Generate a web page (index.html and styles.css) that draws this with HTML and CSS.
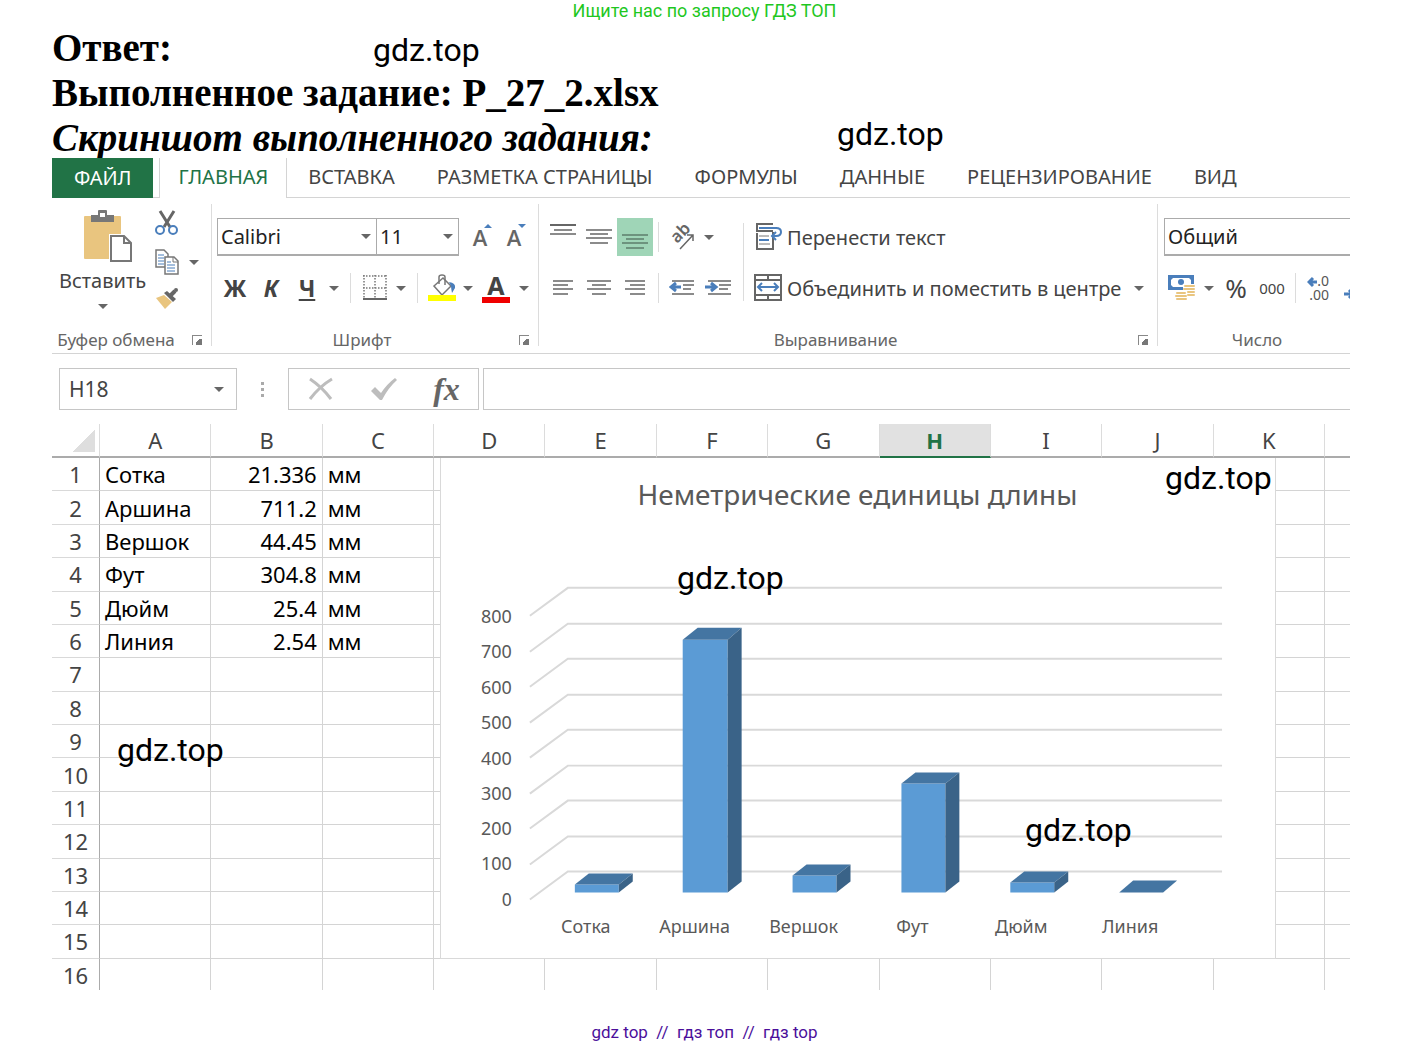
FILE: index.html
```html
<!DOCTYPE html>
<html lang="ru">
<head>
  <meta charset="UTF-8" />
  <meta name="viewport" content="width=device-width, initial-scale=1.0" />
  <title>Ответ: P_27_2.xlsx</title>
  <link rel="stylesheet" href="styles.css">
</head>
<body>
  <p class="top-note">Ищите нас по запросу ГДЗ ТОП</p>

  <main class="page">
    <h1 class="heading">Ответ:</h1>
    <h2 class="heading">Выполненное задание: P_27_2.xlsx</h2>
    <h2 class="heading heading-italic">Скриншот выполненного задания:</h2>

    <div class="excel">
      <!-- Ribbon tabs -->
      <nav class="tabs">
        <button class="tab tab-file">ФАЙЛ</button>
        <button class="tab tab-active">ГЛАВНАЯ</button>
        <button class="tab">ВСТАВКА</button>
        <button class="tab">РАЗМЕТКА СТРАНИЦЫ</button>
        <button class="tab">ФОРМУЛЫ</button>
        <button class="tab">ДАННЫЕ</button>
        <button class="tab">РЕЦЕНЗИРОВАНИЕ</button>
        <button class="tab">ВИД</button>
      </nav>

      <!-- Ribbon -->
      <div class="ribbon">
        <section class="group group-clipboard">
          <div class="group-body">
            <button class="paste">
              <svg width="58" height="54" viewBox="-10 0 58 54">
                <rect x="0" y="6" width="37" height="43" rx="1" fill="#e9c57f"/>
                <path d="M7 12V5h7V1q0-1 1-1h7q1 0 1 1v4h7v7z" fill="#777"/>
                <rect x="16" y="3" width="5" height="4" fill="#fff"/>
                <path d="M25 24h16l8 8v22H25z" fill="#fff"/>
                <path d="M27 26h13l7 7v18H27zM40 26v7h7" fill="#fff" stroke="#777" stroke-width="2"/>
              </svg>
              <span>Вставить</span>
              <i class="arrow"></i>
            </button>
            <div class="clip-tools">
              <button class="tool" aria-label="Вырезать">
                <svg width="24" height="26" viewBox="0 0 24 26">
                  <path d="M5 1l10 16M19 1L9 17" stroke="#666" stroke-width="3" fill="none"/>
                  <circle cx="5" cy="20" r="4" fill="none" stroke="#4a7ebb" stroke-width="2"/>
                  <circle cx="18" cy="20" r="4" fill="none" stroke="#4a7ebb" stroke-width="2"/>
                </svg>
              </button>
              <div class="tool-row">
                <button class="tool" aria-label="Копировать">
                  <svg width="24" height="26" viewBox="0 0 24 26">
                    <path d="M1 1h8l4 4v13H1z" fill="#fff" stroke="#777" stroke-width="1.5"/>
                    <path d="M3 6h6M3 9h6M3 12h6M3 15h6" stroke="#4a7ebb"/>
                    <path d="M10 8h9l4 4v13H10z" fill="#fff" stroke="#777" stroke-width="1.5"/>
                    <path d="M18 8v5h5" fill="none" stroke="#777"/>
                    <path d="M12 13h4M12 16h8M12 19h8M12 22h8" stroke="#4a7ebb"/>
                  </svg>
                </button>
                <i class="arrow"></i>
              </div>
              <button class="tool" aria-label="Формат по образцу">
                <svg width="24" height="22" viewBox="0 0 24 22">
                  <path d="M1 10l8-3 8 7-7 7z" fill="#e9c57f"/>
                  <path d="M9 5l3-2 9 8-3 3z" fill="#666"/>
                  <path d="M15 8l5-5" stroke="#666" stroke-width="4"/>
                  <circle cx="21" cy="2" r="2" fill="#666"/>
                </svg>
              </button>
            </div>
          </div>
          <footer class="group-footer"><span>Буфер обмена</span><i class="launcher"></i></footer>
        </section>

        <section class="group group-font">
          <div class="group-body group-rows">
            <div class="row">
              <label class="combo combo-font"><select aria-label="Шрифт"><option>Calibri</option></select><i class="arrow"></i></label>
              <label class="combo combo-size"><select aria-label="Размер"><option>11</option></select><i class="arrow"></i></label>
              <button class="btn letter" aria-label="Увеличить размер шрифта">A<i class="mark-up"></i></button>
              <button class="btn letter" aria-label="Уменьшить размер шрифта">A<i class="mark-down"></i></button>
            </div>
            <div class="row">
              <button class="btn style-btn"><b>Ж</b></button>
              <button class="btn style-btn"><b><em>К</em></b></button>
              <button class="btn style-btn"><b><u>Ч</u></b></button>
              <span class="drop"><i class="arrow"></i></span>
              <i class="sep"></i>
              <button class="btn" aria-label="Границы">
                <svg width="24" height="26" viewBox="0 0 24 26">
                  <path d="M0 1h24M0 13h24M1 0v24M12 0v24M23 0v24" stroke="#777" stroke-width="1.5" stroke-dasharray="1.5 1.5"/>
                  <path d="M0 24h24" stroke="#666" stroke-width="2"/>
                </svg>
              </button>
              <span class="drop"><i class="arrow"></i></span>
              <i class="sep"></i>
              <button class="btn" aria-label="Цвет заливки">
                <svg width="28" height="28" viewBox="0 0 28 28">
                  <path d="M6 12l9-8 8 8-9 9z" fill="#fff" stroke="#777" stroke-width="1.5"/>
                  <path d="M11 10V3q0-2 3-2t3 2v8" fill="none" stroke="#777" stroke-width="1.5"/>
                  <path d="M21 8q7 1 6 6l-3 5q-1-5-1-7z" fill="#4a7ebb"/>
                  <rect x="0" y="21" width="28" height="6" fill="#ffff00"/>
                </svg>
              </button>
              <span class="drop"><i class="arrow"></i></span>
              <button class="btn font-color"><b>A</b></button>
              <span class="drop"><i class="arrow"></i></span>
            </div>
          </div>
          <footer class="group-footer"><span>Шрифт</span><i class="launcher"></i></footer>
        </section>

        <section class="group group-align">
          <div class="group-body">
            <div class="group-rows">
              <div class="row">
                <button class="btn" aria-label="По верхнему краю">
                  <svg width="26" height="26" viewBox="0 0 26 26"><path d="M0 1h26" stroke="#666" stroke-width="2"/><path d="M4 6h18M0 10h26" stroke="#666" stroke-width="1.5"/></svg>
                </button>
                <button class="btn" aria-label="По середине">
                  <svg width="26" height="24" viewBox="0 0 26 24"><path d="M0 5h26M4 9h18M0 13h26M4 18h18" stroke="#666" stroke-width="1.5"/></svg>
                </button>
                <button class="btn btn-on" aria-label="По нижнему краю">
                  <svg width="26" height="24" viewBox="0 0 26 24"><path d="M0 10h26M4 14h18M0 18h26M4 23h18" stroke="#5d7d6c" stroke-width="1.5"/></svg>
                </button>
                <i class="sep"></i>
                <button class="btn" aria-label="Ориентация">
                  <svg width="28" height="28" viewBox="0 0 28 28">
                    <text transform="translate(9 21) rotate(-45)" class="icon-ab">ab</text>
                    <path d="M12 26L25 12M19 12h6v6" fill="none" stroke="#666" stroke-width="1.5"/>
                  </svg>
                </button>
                <span class="drop"><i class="arrow"></i></span>
              </div>
              <div class="row">
                <button class="btn" aria-label="По левому краю">
                  <svg width="20" height="18" viewBox="0 0 20 18"><path d="M0 2h20M0 6h15M0 10h20M0 15h15" stroke="#666" stroke-width="1.5"/></svg>
                </button>
                <button class="btn" aria-label="По центру">
                  <svg width="24" height="18" viewBox="0 0 24 18"><path d="M0 2h24M5 6h14M0 10h24M5 15h14" stroke="#666" stroke-width="1.5"/></svg>
                </button>
                <button class="btn" aria-label="По правому краю">
                  <svg width="20" height="18" viewBox="0 0 20 18"><path d="M0 2h20M5 6h15M0 10h20M5 15h15" stroke="#666" stroke-width="1.5"/></svg>
                </button>
                <i class="sep"></i>
                <button class="btn" aria-label="Уменьшить отступ">
                  <svg width="26" height="18" viewBox="0 0 26 18">
                    <path d="M3 2h22M14 6h11M14 10h8M3 15h22" stroke="#666" stroke-width="1.5"/>
                    <path d="M12 8H3M7 4L2 8l5 4" fill="none" stroke="#4a7ebb" stroke-width="3"/>
                  </svg>
                </button>
                <button class="btn" aria-label="Увеличить отступ">
                  <svg width="26" height="18" viewBox="0 0 26 18">
                    <path d="M3 2h23M14 6h12M14 10h9M3 15h23" stroke="#666" stroke-width="1.5"/>
                    <path d="M0 8h10M6 4l5 4-5 4" fill="none" stroke="#4a7ebb" stroke-width="3"/>
                  </svg>
                </button>
              </div>
            </div>
            <i class="sep sep-tall"></i>
            <div class="group-rows">
              <div class="row">
                <button class="wide-btn">
                  <svg width="28" height="28" viewBox="0 0 28 28">
                    <path d="M19 1H3v7h16M19 9v17H3V10" fill="none" stroke="#666" stroke-width="2"/>
                    <path d="M5 13h10M5 21h11" stroke="#777"/>
                    <path d="M5 17h10M5 5h18" stroke="#4a7ebb" stroke-width="2"/>
                    <path d="M22 5q5 0 5 4t-5 4h-4M22 9l-4 4 4 4" fill="none" stroke="#4a7ebb" stroke-width="2"/>
                  </svg>
                  <span>Перенести текст</span>
                </button>
              </div>
              <div class="row">
                <button class="wide-btn">
                  <svg width="28" height="28" viewBox="0 0 28 28">
                    <path d="M1 1h26v25H1zM1 6h26M1 21h26M14 1v5M14 21v5" fill="none" stroke="#666" stroke-width="2"/>
                    <path d="M4 13h20M8 9l-4 4 4 4M20 9l4 4-4 4" fill="none" stroke="#4a7ebb" stroke-width="2"/>
                  </svg>
                  <span>Объединить и поместить в центре</span>
                </button>
                <span class="drop drop-merge"><i class="arrow"></i></span>
              </div>
            </div>
          </div>
          <footer class="group-footer"><span>Выравнивание</span><i class="launcher"></i></footer>
        </section>

        <section class="group group-number">
          <div class="group-body group-rows">
            <div class="row">
              <label class="combo combo-number"><select aria-label="Числовой формат"><option>Общий</option></select></label>
            </div>
            <div class="row">
              <button class="btn" aria-label="Финансовый формат">
                <svg width="28" height="28" viewBox="0 0 28 28">
                  <rect x="0" y="1" width="26" height="15" fill="#4a7ebb"/>
                  <path d="M5 4h16l2 2v5l-2 2H5l-2-2V6z" fill="#fff"/>
                  <circle cx="13" cy="8" r="3" fill="#4a7ebb"/>
                  <path d="M15 10h12v14H8v-7h7z" fill="#fff"/>
                  <path d="M17 12h9M16 15h10M20 18h6M20 21h6M9 19h8M8 22h10M9 25h9" stroke="#e9c57f" stroke-width="2" stroke-linecap="round"/>
                </svg>
              </button>
              <span class="drop"><i class="arrow"></i></span>
              <button class="btn percent">%</button>
              <button class="btn zeros">000</button>
              <i class="sep"></i>
              <button class="btn" aria-label="Увеличить разрядность">
                <svg width="24" height="28" viewBox="0 0 24 28">
                  <path d="M10 8H3M6 4L2 8l4 4" fill="none" stroke="#4a7ebb" stroke-width="3"/>
                  <text x="22" y="12" text-anchor="end" class="icon-digits">.0</text>
                  <text x="22" y="26" text-anchor="end" class="icon-digits">.00</text>
                </svg>
              </button>
              <button class="btn" aria-label="Уменьшить разрядность">
                <svg width="24" height="28" viewBox="0 0 24 28">
                  <path d="M1 20h8M6 16l4 4-4 4" fill="none" stroke="#4a7ebb" stroke-width="3"/>
                </svg>
              </button>
            </div>
          </div>
          <footer class="group-footer"><span>Число</span></footer>
        </section>
      </div>

      <!-- Formula bar -->
      <div class="formula-bar">
        <div class="name-box">
          <input type="text" value="H18" aria-label="Имя ячейки" />
          <i class="arrow"></i>
        </div>
        <span class="dots"><i></i><i></i><i></i></span>
        <div class="formula-buttons">
          <button aria-label="Отмена">
            <svg width="26" height="24" viewBox="0 0 26 24"><path d="M2 2q12 8 21 20M24 2Q12 9 2 22" fill="none" stroke="#bdbdbd" stroke-width="3"/></svg>
          </button>
          <button aria-label="Ввод">
            <svg width="28" height="24" viewBox="0 0 28 24"><path d="M1 14l4-4 6 6Q17 7 25 1l2 2Q18 11 12 23h-2z" fill="#bdbdbd"/></svg>
          </button>
          <button class="fx">fx</button>
        </div>
        <input class="formula-input" type="text" aria-label="Строка формул" />
      </div>

      <!-- Sheet -->
      <div class="sheet">
        <table>
          <colgroup>
            <col class="col-num">
            <col class="col-cell" span="11">
            <col>
          </colgroup>
          <thead>
            <tr><th class="corner"></th><th>A</th><th>B</th><th>C</th><th>D</th><th>E</th><th>F</th><th>G</th><th class="selected">H</th><th>I</th><th>J</th><th>K</th><th></th></tr>
          </thead>
          <tbody>
            <tr><th>1</th><td>Сотка</td><td class="num">21.336</td><td>мм</td><td></td><td></td><td></td><td></td><td></td><td></td><td></td><td></td><td></td></tr>
            <tr><th>2</th><td>Аршина</td><td class="num">711.2</td><td>мм</td><td></td><td></td><td></td><td></td><td></td><td></td><td></td><td></td><td></td></tr>
            <tr><th>3</th><td>Вершок</td><td class="num">44.45</td><td>мм</td><td></td><td></td><td></td><td></td><td></td><td></td><td></td><td></td><td></td></tr>
            <tr><th>4</th><td>Фут</td><td class="num">304.8</td><td>мм</td><td></td><td></td><td></td><td></td><td></td><td></td><td></td><td></td><td></td></tr>
            <tr><th>5</th><td>Дюйм</td><td class="num">25.4</td><td>мм</td><td></td><td></td><td></td><td></td><td></td><td></td><td></td><td></td><td></td></tr>
            <tr><th>6</th><td>Линия</td><td class="num">2.54</td><td>мм</td><td></td><td></td><td></td><td></td><td></td><td></td><td></td><td></td><td></td></tr>
            <tr><th>7</th><td></td><td></td><td></td><td></td><td></td><td></td><td></td><td></td><td></td><td></td><td></td><td></td></tr>
            <tr><th>8</th><td></td><td></td><td></td><td></td><td></td><td></td><td></td><td></td><td></td><td></td><td></td><td></td></tr>
            <tr><th>9</th><td></td><td></td><td></td><td></td><td></td><td></td><td></td><td></td><td></td><td></td><td></td><td></td></tr>
            <tr><th>10</th><td></td><td></td><td></td><td></td><td></td><td></td><td></td><td></td><td></td><td></td><td></td><td></td></tr>
            <tr><th>11</th><td></td><td></td><td></td><td></td><td></td><td></td><td></td><td></td><td></td><td></td><td></td><td></td></tr>
            <tr><th>12</th><td></td><td></td><td></td><td></td><td></td><td></td><td></td><td></td><td></td><td></td><td></td><td></td></tr>
            <tr><th>13</th><td></td><td></td><td></td><td></td><td></td><td></td><td></td><td></td><td></td><td></td><td></td><td></td></tr>
            <tr><th>14</th><td></td><td></td><td></td><td></td><td></td><td></td><td></td><td></td><td></td><td></td><td></td><td></td></tr>
            <tr><th>15</th><td></td><td></td><td></td><td></td><td></td><td></td><td></td><td></td><td></td><td></td><td></td><td></td></tr>
            <tr><th>16</th><td></td><td></td><td></td><td></td><td></td><td></td><td></td><td></td><td></td><td></td><td></td><td></td></tr>
          </tbody>
        </table>

        <!-- Chart floats over the cells -->
        <figure class="chart">
          <svg viewBox="0 0 835 501">
            <text x="417" y="47" class="chart-title">Неметрические единицы длины</text>
            <g class="grid-lines">
              <path d="M89 158l38-28h655"/>
              <path d="M89 194l38-28h655"/>
              <path d="M89 229l38-28h655"/>
              <path d="M89 265l38-28h655"/>
              <path d="M89 300l38-28h655"/>
              <path d="M89 336l38-28h655"/>
              <path d="M89 371l38-28h655"/>
              <path d="M89 407l38-28h655"/>
              <path d="M89 442l38-28h655"/>
            </g>
            <g class="axis-y">
              <text x="71" y="165">800</text>
              <text x="71" y="200">700</text>
              <text x="71" y="236">600</text>
              <text x="71" y="271">500</text>
              <text x="71" y="307">400</text>
              <text x="71" y="342">300</text>
              <text x="71" y="377">200</text>
              <text x="71" y="413">100</text>
              <text x="71" y="449">0</text>
            </g>
            <g class="bar-front">
              <path d="M134 427h44v8h-44z"/>
              <path d="M242 182h45v253h-45z"/>
              <path d="M352 418h44v17h-44z"/>
              <path d="M461 326h44v109h-44z"/>
              <path d="M570 425h44v10h-44z"/>
            </g>
            <g class="bar-top">
              <path d="M134 427l14-11h44l-14 11z"/>
              <path d="M242 182l15-12h44l-14 12z"/>
              <path d="M352 418l14-11h44l-14 11z"/>
              <path d="M461 326l14-11h44l-14 11z"/>
              <path d="M570 425l14-11h44l-14 11z"/>
              <path d="M679 435l14-12h44l-14 12z"/>
            </g>
            <g class="bar-side">
              <path d="M178 427l14-11v8l-14 11z"/>
              <path d="M287 182l14-12v254l-14 11z"/>
              <path d="M396 418l14-11v17l-14 11z"/>
              <path d="M505 326l14-11v109l-14 11z"/>
              <path d="M614 425l14-11v10l-14 11z"/>
            </g>
            <g class="axis-x">
              <text x="145" y="476">Сотка</text>
              <text x="254" y="476">Аршина</text>
              <text x="363" y="476">Вершок</text>
              <text x="472" y="476">Фут</text>
              <text x="581" y="476">Дюйм</text>
              <text x="690" y="476">Линия</text>
            </g>
          </svg>
        </figure>
      </div>
    </div>
  </main>

  <p class="bottom-note">gdz top&nbsp; //&nbsp; гдз топ&nbsp; //&nbsp; гдз top</p>

  <!-- Watermarks over the page -->
  <span class="watermark wm-1">gdz.top</span>
  <span class="watermark wm-2">gdz.top</span>
  <span class="watermark wm-3">gdz.top</span>
  <span class="watermark wm-4">gdz.top</span>
  <span class="watermark wm-5">gdz.top</span>
  <span class="watermark wm-6">gdz.top</span>
</body>
</html>
```
FILE: styles.css
```css
* {
  margin: 0;
  padding: 0;
  box-sizing: border-box;
}

body {
  position: relative;
  background-color: #fff;
  color: #444;
  font-family: "Noto Sans", "Open Sans", sans-serif;
}

button,
select,
input {
  font: inherit;
  color: inherit;
  background: none;
  border: none;
  border-radius: 0;
  appearance: none;
  outline: none;
}

button {
  cursor: pointer;
  white-space: nowrap;
}

svg {
  display: block;
  flex: none;
}

/* Notes above and below the page */
.top-note,
.bottom-note {
  font-family: Roboto, sans-serif;
  line-height: 22px;
  text-align: center;
  padding-right: 2px;
}

.top-note {
  font-size: 18px;
  color: #1fc71f;
}

.bottom-note {
  font-size: 17px;
  color: #4b0f9b;
  margin-top: 31px;
}

.page {
  padding: 3px 61px 0 52px;
}

/* Headings */
.heading {
  font-family: "Liberation Serif", serif;
  font-size: 39px;
  line-height: 45px;
  font-weight: bold;
  color: #000;
}

.heading-italic {
  font-style: italic;
  margin-bottom: -2px;
}

.excel {
  overflow: hidden;
}

/* Ribbon tabs */
.tabs {
  display: flex;
  height: 40px;
  border-bottom: 1px solid #d4d4d4;
}

.tab {
  height: 40px;
  padding: 0 21px 3px;
  font-size: 20px;
  line-height: 36px;
}

.tab-file {
  padding: 0 22px;
  margin-right: 6px;
  background-color: #217346;
  color: #fff;
}

.tab-active {
  padding: 0 18px 3px;
  border: solid #d4d4d4;
  border-width: 0 1px;
  background-color: #fff;
  color: #217346;
}

/* Ribbon */
.ribbon {
  display: flex;
  height: 156px;
  padding: 6px 0 7px;
  border-bottom: 1px solid #d4d4d4;
}

.group {
  display: flex;
  flex-direction: column;
  justify-content: space-between;
  flex: none;
  border-right: 1px solid #dcdcdc;
}

.group-body {
  display: flex;
}

.group-clipboard {
  width: 160px;
}

.group-font {
  width: 327px;
  padding-left: 5px;
}

.group-align {
  width: 619px;
  padding-left: 6px;
}

.group-number {
  flex: 1;
  min-width: 0;
  padding-left: 6px;
  border-right: none;
}

.group-rows {
  display: flex;
  flex-direction: column;
  gap: 13px;
  padding-top: 14px;
}

.row {
  display: flex;
  align-items: center;
  height: 38px;
}

.group-footer {
  display: flex;
  align-items: center;
  height: 12px;
  padding-right: 9px;
  font-size: 17px;
  line-height: 12px;
  color: #666;
}

.group-footer span {
  flex: 1;
  margin-right: 12px;
  text-align: center;
  white-space: nowrap;
}

.group-number .group-footer {
  padding-right: 0;
}

.group-number .group-footer span {
  margin-right: 0;
}

/* Dialog launcher in the group corner */
.launcher {
  position: relative;
  width: 10px;
  height: 10px;
  border: solid #888;
  border-width: 1px 0 0 1px;
}

.launcher::after {
  content: "";
  position: absolute;
  right: 0;
  bottom: 0;
  width: 6px;
  height: 6px;
  background: linear-gradient(135deg, #fff 30%, #777 30%);
}

.arrow {
  flex: none;
  width: 10px;
  border: 5px solid transparent;
  border-top-color: #666;
  border-bottom: none;
}

.drop {
  display: flex;
  justify-content: center;
  flex: none;
  width: 18px;
}

.sep {
  flex: none;
  width: 1px;
  height: 30px;
  margin: 0 5px;
  background-color: #dcdcdc;
}

.sep-tall {
  height: 78px;
  margin: 19px 5px 0 7px;
}

.btn {
  display: flex;
  align-items: center;
  justify-content: center;
  width: 36px;
  height: 38px;
  flex: none;
}

.btn-on {
  background-color: #9fd5b7;
}

/* Clipboard group */
.paste {
  display: flex;
  flex-direction: column;
  align-items: center;
  width: 101px;
  padding-top: 6px;
  font-size: 20px;
  line-height: 34px;
}

.paste .arrow {
  margin-top: 6px;
}

.clip-tools {
  display: flex;
  flex-direction: column;
  gap: 13px;
  padding: 6px 0 0 2px;
}

.tool-row {
  display: flex;
  align-items: center;
  gap: 10px;
}

/* Font group */
.combo {
  display: flex;
  align-items: center;
  height: 38px;
  padding: 0 5px 0 3px;
  border: 1px solid #ababab;
  border-bottom-width: 2px;
  font-size: 20px;
  color: #222;
}

.combo select {
  flex: 1;
  min-width: 0;
}

.combo-font {
  width: 160px;
}

.combo-size {
  width: 83px;
  margin: 0 4px 0 -1px;
}

.combo-number {
  flex: 1;
  border-right: none;
}

.letter {
  position: relative;
  width: 34px;
  font-family: "Open Sans", sans-serif;
  font-size: 22px;
  font-weight: 600;
  color: #666;
}

.mark-up,
.mark-down {
  position: absolute;
  top: 6px;
  right: 5px;
  border: 4px solid transparent;
}

.mark-up {
  border-top: none;
  border-bottom-color: #4a7ebb;
}

.mark-down {
  border-bottom: none;
  border-top-color: #4a7ebb;
}

.style-btn {
  font-size: 23px;
}

.group-font .sep {
  margin: 0 7px;
}

.group-font .sep ~ .btn {
  width: 34px;
}

.group-font .row .font-color {
  width: 38px;
}

.font-color {
  flex-direction: column;
  font-size: 25px;
  line-height: 23px;
}

.font-color::after {
  content: "";
  width: 28px;
  height: 6px;
  background-color: #f00000;
}

/* Alignment group */
.wide-btn {
  display: flex;
  align-items: center;
  gap: 5px;
  padding-left: 5px;
  font-size: 20px;
}

.drop-merge {
  margin-left: 9px;
}

.icon-ab {
  font-size: 17px;
  font-weight: 600;
  fill: #666;
}

/* Number group */
.percent {
  font-size: 26px;
}

.zeros {
  font-size: 15px;
}

.icon-digits {
  font-size: 14px;
  fill: #555;
}

/* Formula bar */
.formula-bar {
  display: flex;
  height: 42px;
  margin: 14px 0;
  padding-left: 7px;
}

.name-box {
  display: flex;
  align-items: center;
  width: 178px;
  padding: 0 12px 0 9px;
  border: 1px solid #c6c6c6;
  font-size: 21px;
}

.name-box input {
  flex: 1;
  min-width: 0;
}

.dots {
  display: flex;
  flex-direction: column;
  align-items: center;
  justify-content: center;
  gap: 3px;
  width: 51px;
}

.dots i {
  width: 3px;
  height: 3px;
  background-color: #aaa;
}

.formula-buttons {
  display: flex;
  align-items: center;
  width: 191px;
  margin-right: 4px;
  border: 1px solid #c6c6c6;
}

.formula-buttons button {
  display: flex;
  align-items: center;
  justify-content: center;
  flex: 1;
}

.fx {
  font-family: "Liberation Serif", serif;
  font-size: 32px;
  line-height: 36px;
  font-weight: bold;
  font-style: italic;
  color: #666;
}

.formula-input {
  flex: 1;
  min-width: 0;
  padding: 0 8px;
  border: 1px solid #c6c6c6;
  border-right: none;
}

/* Sheet */
.sheet {
  position: relative;
  height: 566px;
  overflow: hidden;
}

table {
  width: 100%;
  height: 568px;
  table-layout: fixed;
  border-collapse: separate;
  border-spacing: 0;
}

.col-num {
  width: 48px;
}

.col-cell {
  width: 8.58%;
}

thead th {
  height: 34px;
  font-size: 22px;
  line-height: 30px;
  font-weight: normal;
  border-right: 1px solid #dcdcdc;
  border-bottom: 2px solid #ababab;
}

thead .selected {
  background-color: #e1e1e1;
  color: #217346;
  font-weight: bold;
  border-bottom-color: #217346;
}

.corner {
  background: linear-gradient(135deg, transparent 50%, #dedede 50%) 21px 6px / 22px 22px no-repeat;
}

tbody th {
  font-size: 22px;
  line-height: 30px;
  font-weight: normal;
  border-right: 1px solid #ababab;
  border-bottom: 1px solid #d9d9d9;
}

td {
  padding: 0 5px;
  font-size: 22px;
  line-height: 30px;
  color: #000;
  white-space: nowrap;
  border-right: 1px solid #d4d4d4;
  border-bottom: 1px solid #d4d4d4;
}

th:last-child,
td:last-child {
  border-right: none;
}

.num {
  text-align: right;
}

/* Chart */
.chart {
  position: absolute;
  top: 34px;
  left: 388px;
  right: 74px;
  border: 1px solid #d9d9d9;
  border-top: none;
  background-color: #fff;
}

.chart text {
  fill: #595959;
}

.chart-title {
  font-size: 28px;
  text-anchor: middle;
}

.grid-lines path {
  fill: none;
  stroke: #d9d9d9;
  stroke-width: 2px;
}

.axis-y text {
  font-size: 18px;
  text-anchor: end;
}

.axis-x text {
  font-size: 18px;
  text-anchor: middle;
}

.bar-front {
  fill: #5b9bd5;
}

.bar-top {
  fill: #4475a2;
}

.bar-side {
  fill: #3a6388;
}

/* Watermarks */
.watermark {
  position: absolute;
  font-family: Roboto, sans-serif;
  font-size: 32px;
  line-height: 38px;
  color: #000;
}

.wm-1 {
  left: 373px;
  top: 31px;
}

.wm-2 {
  left: 837px;
  top: 115px;
}

.wm-3 {
  left: 1165px;
  top: 459px;
}

.wm-4 {
  left: 677px;
  top: 559px;
}

.wm-5 {
  left: 117px;
  top: 731px;
}

.wm-6 {
  left: 1025px;
  top: 811px;
}
```
